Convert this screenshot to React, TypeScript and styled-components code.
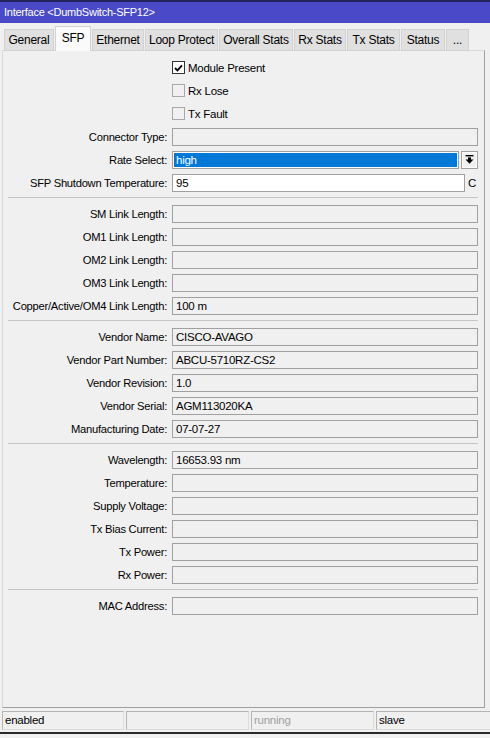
import React from "react";
import styled, { createGlobalStyle } from "styled-components";

const GlobalStyle = createGlobalStyle`
  html, body { margin: 0; padding: 0; background: #f0f0f0; }
  body {
    font-family: "Liberation Sans", Arial, sans-serif;
    font-size: 11px;
    letter-spacing: -0.25px;
    color: #000;
  }
  * { box-sizing: border-box; }
`;

const Window = styled.div`
  width: 490px;
  height: 738px;
  display: flex;
  flex-direction: column;
  background: #f0f0f0;
  overflow: hidden;
`;

const TitleBar = styled.div`
  height: 23px;
  flex: none;
  background: #4a4ac8;
  border-top: 2px solid #23235e;
  color: #fff;
  font-size: 11px;
  line-height: 21px;
  padding-left: 4px;
  white-space: nowrap;
`;

const TabStrip = styled.div`
  height: 28px;
  flex: none;
  display: flex;
  align-items: flex-end;
  padding-left: 4px;
`;

const Tab = styled.div<{ $w: number; $active?: boolean }>`
  width: ${(p) => p.$w}px;
  height: ${(p) => (p.$active ? 25 : 22)}px;
  margin-right: 1px;
  background: ${(p) => (p.$active ? "#fafafa" : "#e0e0e0")};
  border: 1px solid #d2d2d2;
  border-bottom: ${(p) => (p.$active ? "none" : "1px solid #d2d2d2")};
  text-align: center;
  padding-top: ${(p) => (p.$active ? 4 : 3)}px;
  line-height: 14px;
  font-size: 12px;
  white-space: nowrap;
  position: relative;
  z-index: ${(p) => (p.$active ? 2 : 1)};
`;

const Panel = styled.div`
  width: 483px;
  height: 658px;
  margin-left: 2px;
  flex: none;
  border: 1px solid #d9d9d9;
  border-right-color: #a0a0a0;
  border-bottom-color: #a0a0a0;
  padding: 5px 6px 0 0;
  margin-top: -1px;
  display: flex;
  flex-direction: column;
`;

const Row = styled.div`
  display: grid;
  grid-template-columns: 164px 1fr;
  column-gap: 5px;
  height: 23px;
  align-items: center;
`;

const Label = styled.div`
  text-align: right;
  white-space: nowrap;
  font-size: 11.2px;
`;

const FieldGroup = styled.div`
  display: flex;
  align-items: center;
  gap: 2px;
`;

const Field = styled.div<{ $bg?: string; $w?: number }>`
  height: 18px;
  ${(p) => (p.$w ? `width: ${p.$w}px; flex: none;` : "flex: 1;")}
  border: 1px solid #a0a0a0;
  background: ${(p) => p.$bg || "#f0f0f0"};
  padding: 0 3px;
  line-height: 16px;
  font-size: 11.5px;
  white-space: nowrap;
  overflow: hidden;
`;

const SelectField = styled.div`
  flex: 1;
  height: 18px;
  border: 1px solid #a0a0a0;
  background: #0078d7;
  box-shadow: inset 0 0 0 1px #fff;
  color: #fff;
  padding: 0 3px;
  line-height: 16px;
  font-size: 11.5px;
`;

const DropButton = styled.div`
  width: 17px;
  height: 18px;
  flex: none;
  border: 1px solid #a0a0a0;
  background: #f0f0f0;
  box-shadow: inset 0 0 0 1px #fdfdfd;
  display: flex;
  align-items: center;
  justify-content: center;
`;

const Unit = styled.span`
  margin-left: 1px;
  font-size: 11.5px;
  width: 10px;
`;

const CheckRow = styled.div`
  display: flex;
  align-items: center;
  height: 23px;
  padding-left: 169px;
`;

const Box = styled.div<{ $checked?: boolean }>`
  width: 13px;
  height: 13px;
  border: 1px solid ${(p) => (p.$checked ? "#333" : "#a8a8a8")};
  background: ${(p) => (p.$checked ? "#fff" : "#f0f0f0")};
  display: flex;
  align-items: center;
  justify-content: center;
  margin-right: 3px;
`;

const CheckText = styled.span`
  font-size: 11.5px;
`;

const Separator = styled.div`
  height: 8px;
  margin-left: 5px;
  padding-top: 3px;
  &::before {
    content: "";
    display: block;
    border-top: 1px solid #c6c6c6;
  }
`;

const StatusBar = styled.div`
  height: 24px;
  flex: none;
  display: flex;
  gap: 2px;
  padding: 3px 0 2px 2px;
`;

const StatusCell = styled.div<{ $w: number; $muted?: boolean }>`
  width: ${(p) => p.$w}px;
  flex: none;
  height: 19px;
  border: 1px solid #b4b4b4;
  border-right-color: #dcdcdc;
  border-bottom-color: #dcdcdc;
  padding-left: 2px;
  line-height: 17px;
  font-size: 11.5px;
  color: ${(p) => (p.$muted ? "#a0a0a0" : "#000")};
`;

const BottomEdge = styled.div`
  flex: none;
  height: 2px;
  background: #2a2a2a;
`;

const tabs: { name: string; w: number }[] = [
  { name: "General", w: 50 },
  { name: "SFP", w: 36 },
  { name: "Ethernet", w: 52 },
  { name: "Loop Protect", w: 73 },
  { name: "Overall Stats", w: 74 },
  { name: "Rx Stats", w: 52 },
  { name: "Tx Stats", w: 53 },
  { name: "Status", w: 44 },
  { name: "...", w: 23 },
];

type Item =
  | { kind: "field"; label: string; value?: string }
  | { kind: "sep" };

const CheckIcon = () => (
  <svg width="9" height="8" viewBox="0 0 9 8">
    <path d="M1 4 L3.4 6.4 L8 1.4" fill="none" stroke="#000" strokeWidth="1.8" />
  </svg>
);

const DropIcon = () => (
  <svg width="9" height="9" viewBox="0 0 9 9">
    <rect x="0.5" y="0" width="8" height="1.4" fill="#000" />
    <rect x="3" y="2.4" width="3" height="2.6" fill="#000" />
    <polygon points="0.5,4.6 8.5,4.6 4.5,8.8" fill="#000" />
  </svg>
);

const groups: Item[] = [
  { kind: "sep" },
  { kind: "field", label: "SM Link Length:" },
  { kind: "field", label: "OM1 Link Length:" },
  { kind: "field", label: "OM2 Link Length:" },
  { kind: "field", label: "OM3 Link Length:" },
  { kind: "field", label: "Copper/Active/OM4 Link Length:", value: "100 m" },
  { kind: "sep" },
  { kind: "field", label: "Vendor Name:", value: "CISCO-AVAGO" },
  { kind: "field", label: "Vendor Part Number:", value: "ABCU-5710RZ-CS2" },
  { kind: "field", label: "Vendor Revision:", value: "1.0" },
  { kind: "field", label: "Vendor Serial:", value: "AGM113020KA" },
  { kind: "field", label: "Manufacturing Date:", value: "07-07-27" },
  { kind: "sep" },
  { kind: "field", label: "Wavelength:", value: "16653.93 nm" },
  { kind: "field", label: "Temperature:" },
  { kind: "field", label: "Supply Voltage:" },
  { kind: "field", label: "Tx Bias Current:" },
  { kind: "field", label: "Tx Power:" },
  { kind: "field", label: "Rx Power:" },
  { kind: "sep" },
  { kind: "field", label: "MAC Address:" },
];

export default function App() {
  return (
    <>
      <GlobalStyle />
      <Window>
        <TitleBar>Interface &lt;DumbSwitch-SFP12&gt;</TitleBar>
        <TabStrip>
          {tabs.map((t) => (
            <Tab key={t.name} $w={t.w} $active={t.name === "SFP"}>
              {t.name}
            </Tab>
          ))}
        </TabStrip>
        <Panel>
          <CheckRow>
            <Box $checked>
              <CheckIcon />
            </Box>
            <CheckText>Module Present</CheckText>
          </CheckRow>
          <CheckRow>
            <Box />
            <CheckText>Rx Lose</CheckText>
          </CheckRow>
          <CheckRow>
            <Box />
            <CheckText>Tx Fault</CheckText>
          </CheckRow>
          <Row>
            <Label>Connector Type:</Label>
            <Field />
          </Row>
          <Row>
            <Label>Rate Select:</Label>
            <FieldGroup>
              <SelectField>high</SelectField>
              <DropButton>
                <DropIcon />
              </DropButton>
            </FieldGroup>
          </Row>
          <Row>
            <Label>SFP Shutdown Temperature:</Label>
            <FieldGroup>
              <Field $bg="#fff">95</Field>
              <Unit>C</Unit>
            </FieldGroup>
          </Row>
          {groups.map((it, i) =>
            it.kind === "sep" ? (
              <Separator key={i} />
            ) : (
              <Row key={i}>
                <Label>{it.label}</Label>
                <Field>{it.value}</Field>
              </Row>
            )
          )}
        </Panel>
        <StatusBar>
          <StatusCell $w={122}>enabled</StatusCell>
          <StatusCell $w={123} />
          <StatusCell $w={123} $muted>
            running
          </StatusCell>
          <StatusCell $w={116}>slave</StatusCell>
        </StatusBar>
        <BottomEdge />
      </Window>
    </>
  );
}
